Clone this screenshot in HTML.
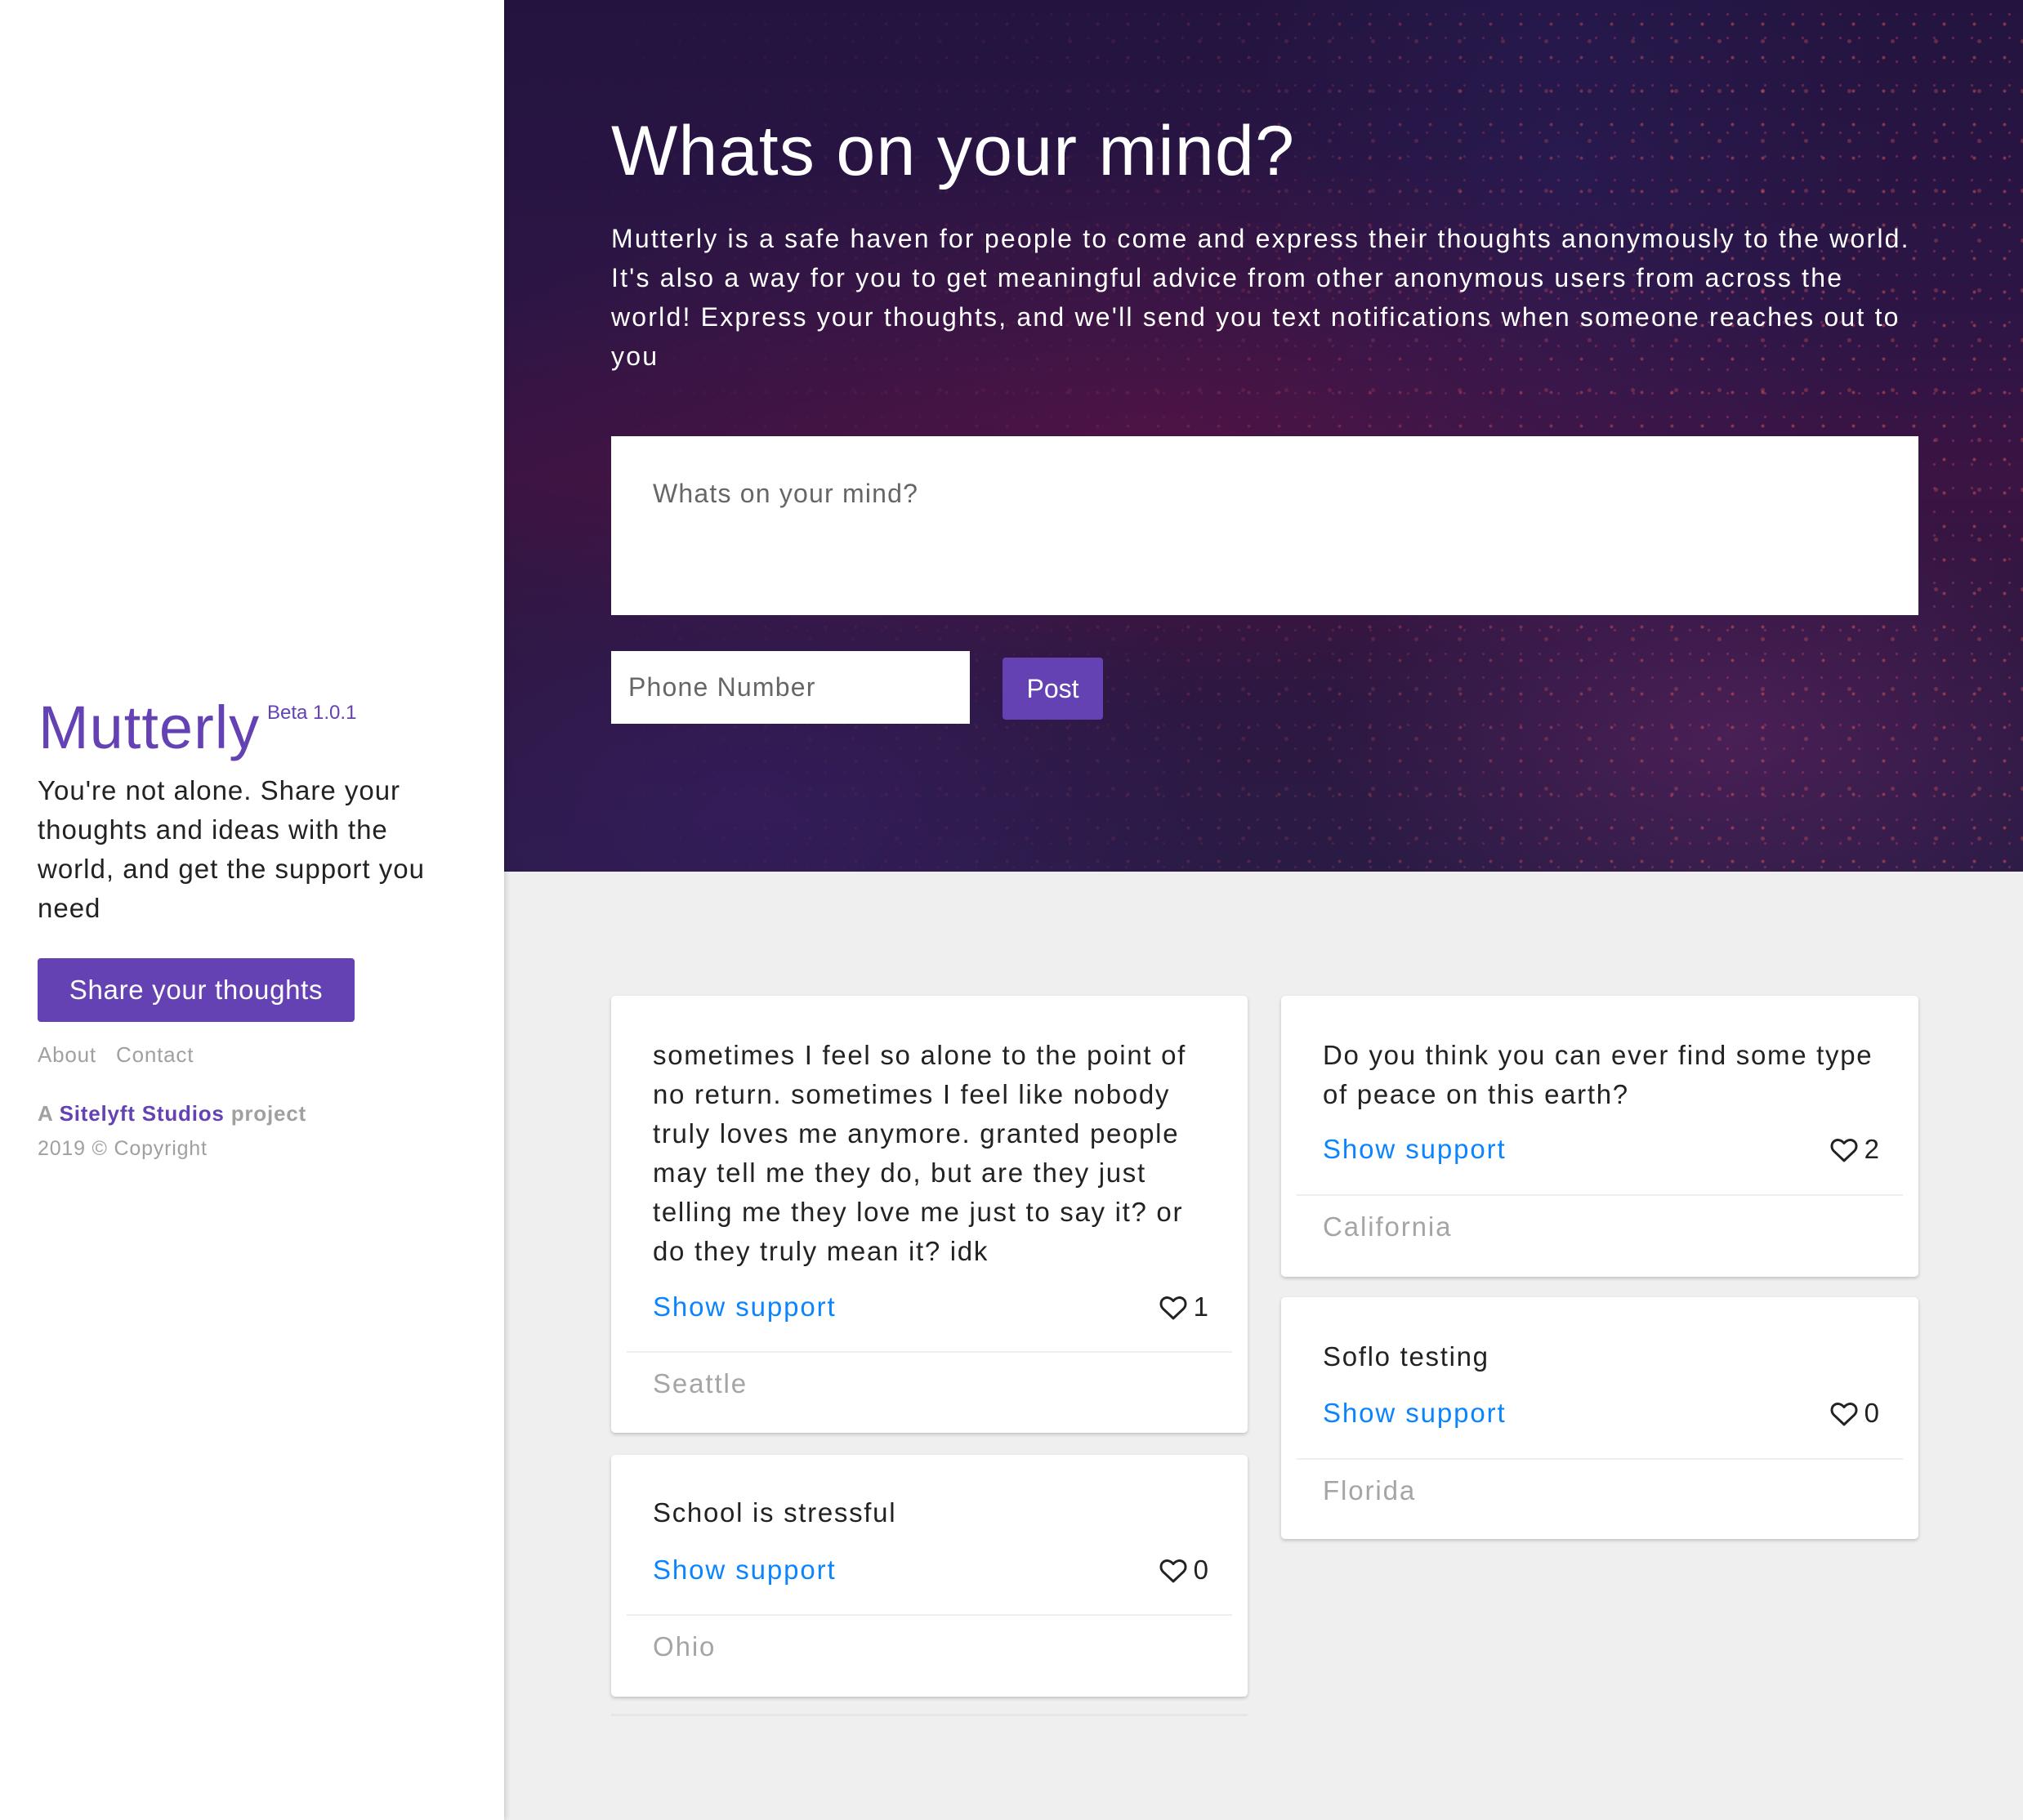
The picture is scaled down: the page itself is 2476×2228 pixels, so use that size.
<!DOCTYPE html>
<html><head><meta charset="utf-8"><style>
*{margin:0;padding:0;box-sizing:border-box}
body{width:2476px;height:2228px;background:#efefef;font-family:"Liberation Sans",sans-serif;position:relative;overflow:hidden}
.abs{position:absolute}
#side{left:0;top:0;width:617px;height:2228px;background:#fff;box-shadow:2px 0 6px rgba(0,0,0,.15);z-index:2}
#hero{left:617px;top:0;width:1859px;height:1067px;overflow:hidden;
background:
radial-gradient(ellipse 500px 300px at 1500px 900px,rgba(110,40,110,.45),transparent),
radial-gradient(ellipse 600px 400px at 300px 1000px,rgba(60,30,110,.5),transparent),
radial-gradient(ellipse 900px 350px at 800px 520px,rgba(100,20,70,.45),transparent),
radial-gradient(ellipse 400px 700px at 1300px 200px,rgba(40,30,90,.5),transparent),
linear-gradient(180deg,#23143f 0%,#2c1545 35%,#3b1443 55%,#2d1740 75%,#2a1b45 100%)}
.dots{position:absolute;inset:0;
background-image:radial-gradient(circle,rgba(210,80,90,.55) 1.6px,transparent 2.4px),radial-gradient(circle,rgba(200,70,90,.4) 1.2px,transparent 2px),radial-gradient(circle,rgba(220,90,90,.35) 2px,transparent 3px);
background-size:37px 41px,23px 29px,53px 61px;background-position:5px 9px,14px 3px,30px 20px;
-webkit-mask-image:linear-gradient(90deg,transparent 0%,rgba(0,0,0,.3) 40%,#000 80%);mask-image:linear-gradient(90deg,transparent 0%,rgba(0,0,0,.3) 40%,#000 80%)}
h1{position:absolute;left:131px;top:130px;color:#fff;font-weight:normal;font-size:86px;letter-spacing:1.3px;line-height:110px;white-space:nowrap}
.intro{position:absolute;left:131px;top:268px;color:#fff;font-size:32px;line-height:48px;letter-spacing:2.2px;white-space:nowrap}
.ta{position:absolute;left:131px;top:534px;width:1600px;height:219px;background:#fff}
.ta span{position:absolute;left:51px;top:52px;font-size:32px;color:#666;letter-spacing:1.2px}
.ph{position:absolute;left:131px;top:797px;width:439px;height:89px;background:#fff}
.ph span{position:absolute;left:21px;top:26px;font-size:32px;color:#666;letter-spacing:1.2px}
.post{position:absolute;left:610px;top:805px;width:123px;height:76px;background:#6442b4;border-radius:4px;color:#fff;font-size:32px;text-align:center;line-height:76px}
.logo{left:47px;top:848px;color:#6442b4;font-size:74px;letter-spacing:1px;white-space:nowrap}
.beta{left:327px;top:859px;color:#6442b4;font-size:24px}
.tag{left:46px;top:944px;font-size:33px;line-height:48px;color:#222;letter-spacing:1px}
.btn{left:46px;top:1173px;width:388px;height:78px;background:#6442b4;border-radius:4px;color:#fff;font-size:33px;line-height:78px;text-align:center;letter-spacing:.7px}
.gray{color:#a0a0a0;font-size:26px;letter-spacing:.8px;white-space:nowrap}
.card{position:absolute;background:#fff;border-radius:5px;box-shadow:0 2px 4px rgba(0,0,0,.2)}
.card .t{position:absolute;left:51px;font-size:33px;line-height:48px;color:#222;letter-spacing:1.7px;white-space:nowrap}
.card .s{position:absolute;left:51px;font-size:33px;line-height:48px;color:#0a84ff;letter-spacing:1.9px}
.card .h{position:absolute;right:48px;font-size:33px;line-height:48px;color:#222;display:flex;align-items:center;gap:8px}
.card .d{position:absolute;left:19px;right:19px;height:2px;background:#eee}
.card .l{position:absolute;left:51px;font-size:33px;line-height:48px;color:#a5a5a5;letter-spacing:1.9px}
</style></head><body>
<div id="side" class="abs">
<div class="abs logo">Mutterly</div>
<div class="abs beta">Beta 1.0.1</div>
<div class="abs tag">You're not alone. Share your<br>thoughts and ideas with the<br>world, and get the support you<br>need</div>
<div class="abs btn">Share your thoughts</div>
<div class="abs gray" style="left:46px;top:1276px">About&nbsp;&nbsp; Contact</div>
<div class="abs gray" style="left:46px;top:1348px;font-weight:bold">A <span style="color:#6442b4">Sitelyft Studios</span> project</div>
<div class="abs gray" style="left:46px;top:1392px;font-size:25px">2019 © Copyright</div>
</div>
<div id="hero" class="abs"><div class="dots"></div>
<h1>Whats on your mind?</h1>
<div class="intro">Mutterly is a safe haven for people to come and express their thoughts anonymously to the world.<br>It's also a way for you to get meaningful advice from other anonymous users from across the<br>world! Express your thoughts, and we'll send you text notifications when someone reaches out to<br>you</div>
<div class="ta"><span>Whats on your mind?</span></div>
<div class="ph"><span>Phone Number</span></div>
<div class="post">Post</div>
</div>

<svg width="0" height="0" style="position:absolute"><defs><symbol id="hrt" viewBox="0 0 24 22"><path d="M12 20.5 3.2 12.2C.6 9.6.8 5.6 3.4 3.6 5.9 1.7 9.5 2.3 12 5.4 14.5 2.3 18.1 1.7 20.6 3.6c2.6 2 2.8 6 .2 8.6Z" fill="none" stroke="#222" stroke-width="2.1" stroke-linejoin="round"/></symbol></defs></svg>

<div class="card" style="left:748px;top:1219px;width:779px;height:535px">
<div class="t" style="top:49px">sometimes I feel so alone to the point of<br>no return. sometimes I feel like nobody<br>truly loves me anymore. granted people<br>may tell me they do, but are they just<br>telling me they love me just to say it? or<br>do they truly mean it? idk</div>
<div class="s" style="top:357px">Show support</div>
<div class="h" style="top:357px"><svg width="34" height="31"><use href="#hrt"/></svg>1</div>
<div class="d" style="top:435px"></div>
<div class="l" style="top:451px">Seattle</div>
</div>

<div class="card" style="left:748px;top:1781px;width:779px;height:296px">
<div class="t" style="top:47px">School is stressful</div>
<div class="s" style="top:117px">Show support</div>
<div class="h" style="top:117px"><svg width="34" height="31"><use href="#hrt"/></svg>0</div>
<div class="d" style="top:195px"></div>
<div class="l" style="top:211px">Ohio</div>
</div>
<div class="abs" style="left:748px;top:2098px;width:779px;height:3px;background:#e6e6e6"></div>

<div class="card" style="left:1568px;top:1219px;width:780px;height:344px">
<div class="t" style="top:49px">Do you think you can ever find some type<br>of peace on this earth?</div>
<div class="s" style="top:164px">Show support</div>
<div class="h" style="top:164px"><svg width="34" height="31"><use href="#hrt"/></svg>2</div>
<div class="d" style="top:243px"></div>
<div class="l" style="top:259px">California</div>
</div>

<div class="card" style="left:1568px;top:1588px;width:780px;height:296px">
<div class="t" style="top:49px">Soflo testing</div>
<div class="s" style="top:118px">Show support</div>
<div class="h" style="top:118px"><svg width="34" height="31"><use href="#hrt"/></svg>0</div>
<div class="d" style="top:197px"></div>
<div class="l" style="top:213px">Florida</div>
</div>
</body></html>
